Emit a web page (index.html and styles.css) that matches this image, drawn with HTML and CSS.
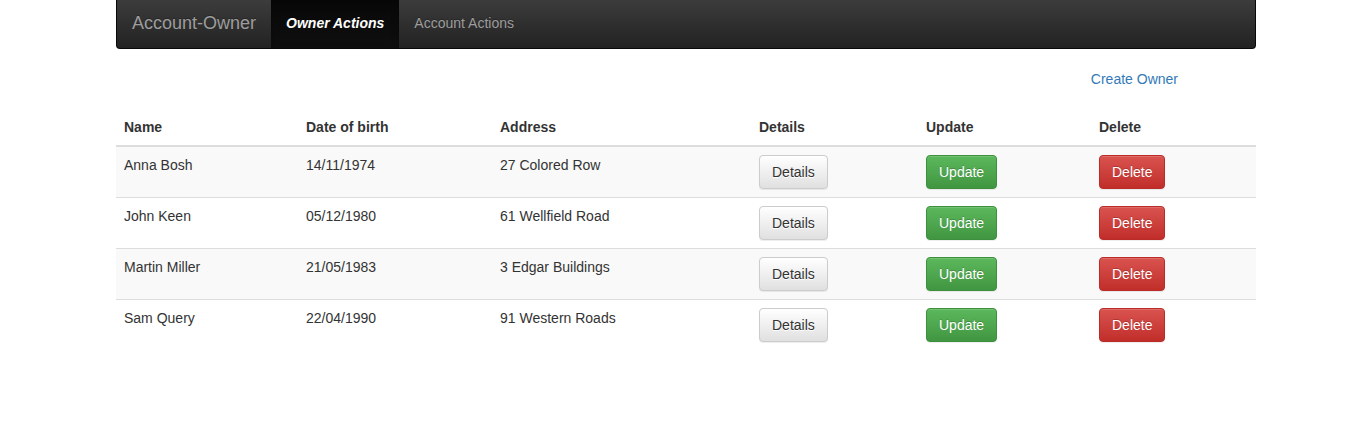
FILE: index.html
```html
<!DOCTYPE html>
<html lang="en">
<head>
<meta charset="utf-8">
<title>Account-Owner</title>
<link rel="stylesheet" href="styles.css">
</head>
<body>
<div class="container">
  <nav class="navbar">
    <a class="brand" href="#">Account-Owner</a>
    <ul class="nav">
      <li class="active"><a href="#">Owner Actions</a></li>
      <li><a href="#">Account Actions</a></li>
    </ul>
  </nav>

  <div class="toolbar">
    <a class="create-link" href="#">Create Owner</a>
  </div>

  <table class="table">
    <colgroup>
      <col class="c-name"><col class="c-dob"><col class="c-addr"><col class="c-det"><col class="c-upd"><col class="c-del">
    </colgroup>
    <thead>
      <tr><th>Name</th><th>Date of birth</th><th>Address</th><th>Details</th><th>Update</th><th>Delete</th></tr>
    </thead>
    <tbody>
      <tr>
        <td>Anna Bosh</td><td>14/11/1974</td><td>27 Colored Row</td>
        <td><button class="btn btn-default">Details</button></td>
        <td><button class="btn btn-success">Update</button></td>
        <td><button class="btn btn-danger">Delete</button></td>
      </tr>
      <tr>
        <td>John Keen</td><td>05/12/1980</td><td>61 Wellfield Road</td>
        <td><button class="btn btn-default">Details</button></td>
        <td><button class="btn btn-success">Update</button></td>
        <td><button class="btn btn-danger">Delete</button></td>
      </tr>
      <tr>
        <td>Martin Miller</td><td>21/05/1983</td><td>3 Edgar Buildings</td>
        <td><button class="btn btn-default">Details</button></td>
        <td><button class="btn btn-success">Update</button></td>
        <td><button class="btn btn-danger">Delete</button></td>
      </tr>
      <tr>
        <td>Sam Query</td><td>22/04/1990</td><td>91 Western Roads</td>
        <td><button class="btn btn-default">Details</button></td>
        <td><button class="btn btn-success">Update</button></td>
        <td><button class="btn btn-danger">Delete</button></td>
      </tr>
    </tbody>
  </table>
</div>
</body>
</html>
```

FILE: styles.css
```css
* { box-sizing: border-box; }

html, body {
  margin: 0;
  padding: 0;
  background: #fff;
}

body {
  font-family: "Liberation Sans", Arial, Helvetica, sans-serif;
  font-size: 14px;
  line-height: 20px;
  color: #333;
}

.container {
  width: 1140px;
  margin-left: 116px;
}

/* Navbar */
.navbar {
  display: flex;
  align-items: stretch;
  height: 49px;
  background-image: linear-gradient(to bottom, #3c3c3c 0, #222 100%);
  border: 1px solid #080808;
  border-top: 0;
  border-radius: 0 0 4px 4px;
  margin-bottom: 20px;
  overflow: hidden;
}

.brand {
  display: block;
  padding: 13px 15px 0 15px;
  font-size: 18px;
  line-height: 20px;
  color: #9d9d9d;
  text-decoration: none;
  text-shadow: 0 -1px 0 rgba(0,0,0,.25);
}

.nav {
  display: flex;
  list-style: none;
  margin: 0;
  padding: 0;
}

.nav li a {
  display: block;
  height: 100%;
  padding: 13px 15px 0 15px;
  color: #9d9d9d;
  text-decoration: none;
  text-shadow: 0 -1px 0 rgba(0,0,0,.25);
}

.nav li.active a {
  color: #fff;
  font-weight: bold;
  font-style: italic;
  background-image: linear-gradient(to bottom, #080808 0, #0f0f0f 100%);
  box-shadow: inset 0 3px 9px rgba(0,0,0,.25);
}

/* Toolbar */
.toolbar {
  display: flex;
  justify-content: flex-end;
  padding-right: 78px;
  margin-bottom: 20px;
}

.create-link {
  color: #337ab7;
  text-decoration: none;
}

/* Table */
.table {
  width: 100%;
  border-collapse: collapse;
  border-spacing: 0;
  table-layout: fixed;
}

.c-name { width: 182px; }
.c-dob { width: 194px; }
.c-addr { width: 259px; }
.c-det { width: 167px; }
.c-upd { width: 173px; }
.c-del { width: 165px; }

.table th {
  text-align: left;
  font-weight: bold;
  padding: 8px;
  line-height: 20px;
  vertical-align: bottom;
  border-bottom: 2px solid #ddd;
}

.table td {
  padding: 8px;
  line-height: 20px;
  vertical-align: top;
  border-top: 1px solid #ddd;
}

.table thead + tbody tr:first-child td {
  border-top: 0;
}

.table tbody tr:nth-child(odd) {
  background-color: #f9f9f9;
}

/* Buttons */
.btn {
  display: inline-block;
  font-family: inherit;
  font-size: 14px;
  line-height: 20px;
  padding: 6px 12px;
  border: 1px solid transparent;
  border-radius: 4px;
  cursor: pointer;
  box-shadow: inset 0 1px 0 rgba(255,255,255,.15), 0 1px 1px rgba(0,0,0,.075);
}

.btn-default {
  color: #333;
  background-image: linear-gradient(to bottom, #fff 0, #e0e0e0 100%);
  border-color: #ccc;
  text-shadow: 0 1px 0 #fff;
}

.btn-success {
  color: #fff;
  background-image: linear-gradient(to bottom, #5cb85c 0, #419641 100%);
  border-color: #3e8f3e;
  text-shadow: 0 -1px 0 rgba(0,0,0,.2);
}

.btn-danger {
  color: #fff;
  background-image: linear-gradient(to bottom, #d9534f 0, #c12e2a 100%);
  border-color: #b92c28;
  text-shadow: 0 -1px 0 rgba(0,0,0,.2);
}
```
